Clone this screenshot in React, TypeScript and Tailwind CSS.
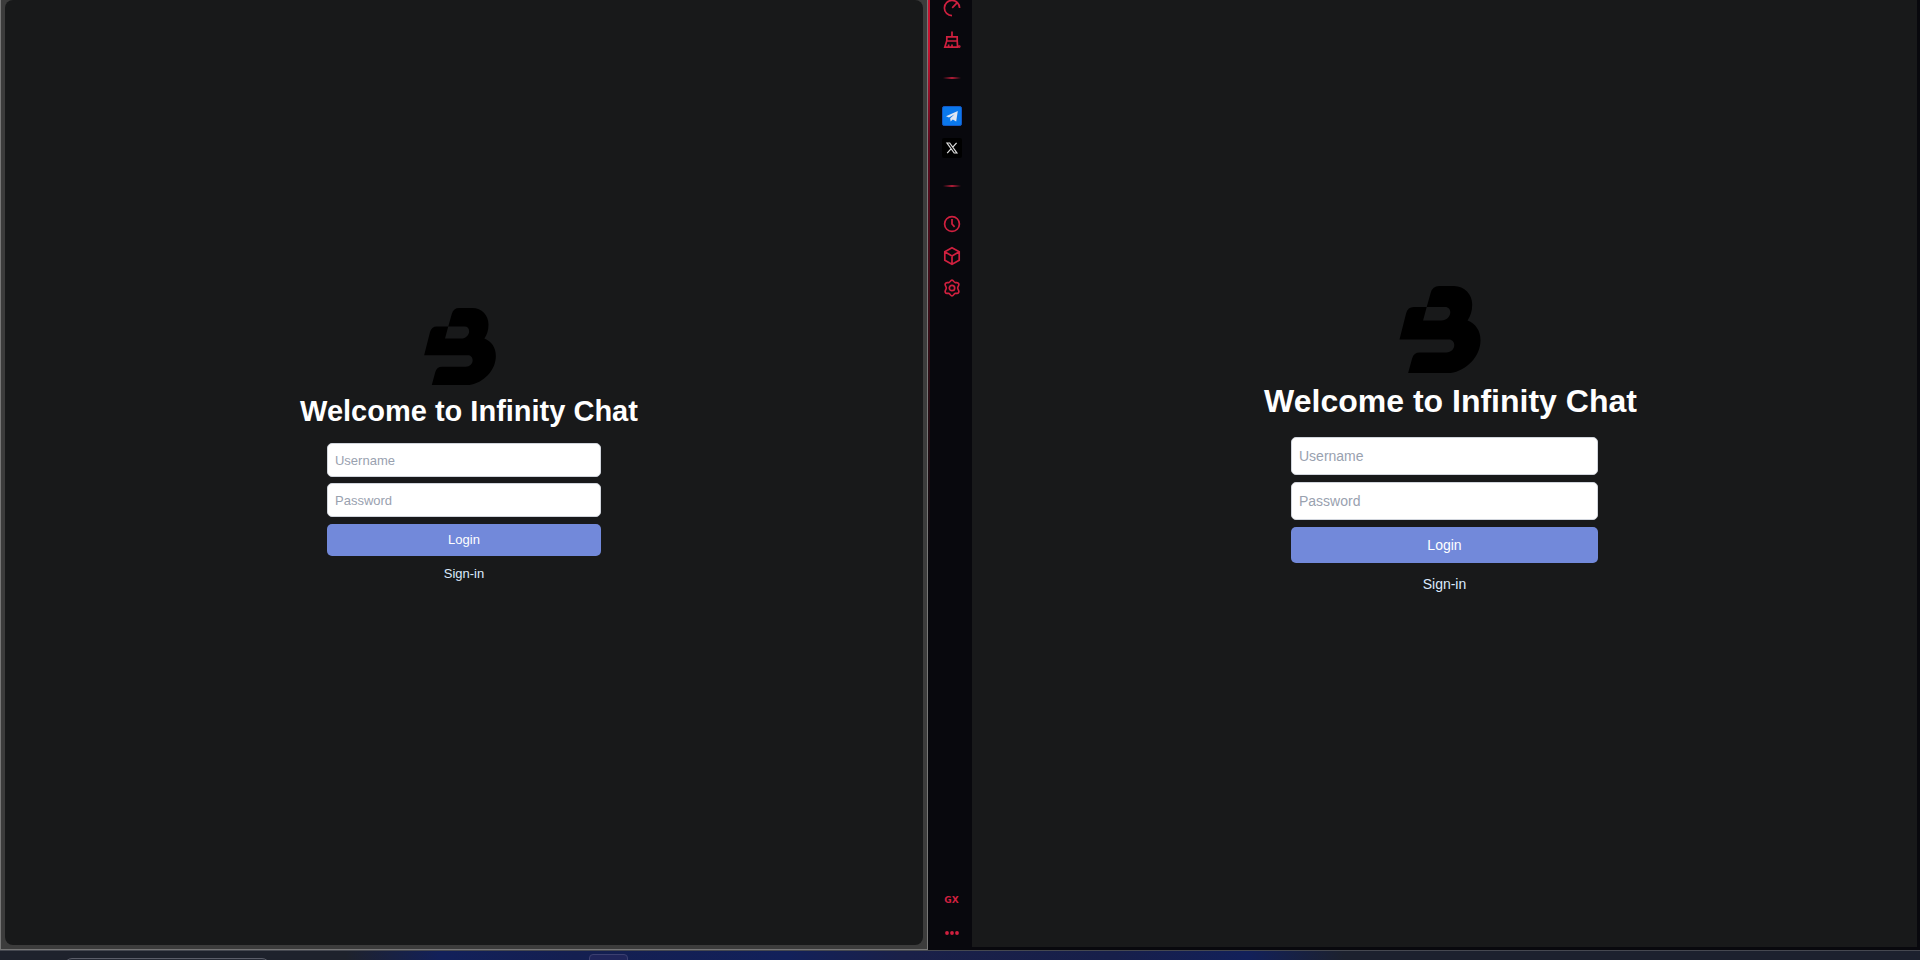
import type { ReactNode } from "react";

function Logo({ className }: { className: string }) {
  return (
    <svg viewBox="0 0 244 262" className={className} aria-hidden="true">
      <path
        fillRule="evenodd"
        d="M82 63L94 20Q100 0 119 0H164C196 0 219 25 219 56C219 76 214 91 205 104C229 113 244 135 244 163C244 213 201 254 154 262H26L38 218Q43 200 61 200H141C156 200 165 190 165 178C165 168 158 161 149 161H0L20 82Q25 63 43 63ZM82 63L71 104H126C142 104 153 92 153 79C153 70 147 63 138 63Z"
        fill="#000"
      />
    </svg>
  );
}

function LargeLogin() {
  return (
    <form className="flex flex-col items-center pb-17" onSubmit={(e) => e.preventDefault()}>
      <Logo className="mr-2 h-[87px] w-[82px]" />
      <h1 className="ml-3 mt-2 text-[32px] leading-10 font-bold text-white">Welcome to Infinity Chat</h1>
      <input
        aria-label="Username"
        placeholder="Username"
        className="mt-4 h-[38px] w-[307px] rounded-[5px] border border-gray-300 bg-white px-[7px] text-sm text-gray-800 placeholder:text-gray-400"
      />
      <input
        type="password"
        aria-label="Password"
        placeholder="Password"
        className="mt-[7px] h-[38px] w-[307px] rounded-[5px] border border-gray-300 bg-white px-[7px] text-sm text-gray-800 placeholder:text-gray-400"
      />
      <button className="mt-[7px] h-9 w-[307px] rounded-[5px] bg-[#7289da] text-sm text-white">Login</button>
      <a href="#signin" className="mt-[11px] text-sm text-blue-100">
        Sign-in
      </a>
    </form>
  );
}

function SmallLogin() {
  return (
    <form className="flex flex-col items-center pb-[53px]" onSubmit={(e) => e.preventDefault()}>
      <Logo className="mr-2 h-[77px] w-[72px]" />
      <h1 className="ml-[10px] mt-2 text-[29px] leading-9 font-bold text-white">Welcome to Infinity Chat</h1>
      <input
        aria-label="Username"
        placeholder="Username"
        className="mt-[14px] h-[34px] w-[274px] rounded-[5px] border border-gray-300 bg-white px-[7px] text-[13px] text-gray-800 placeholder:text-gray-400"
      />
      <input
        type="password"
        aria-label="Password"
        placeholder="Password"
        className="mt-[6px] h-[34px] w-[274px] rounded-[5px] border border-gray-300 bg-white px-[7px] text-[13px] text-gray-800 placeholder:text-gray-400"
      />
      <button className="mt-[7px] h-8 w-[274px] rounded-[5px] bg-[#7289da] text-[13px] text-white">Login</button>
      <a href="#signin" className="mt-2 text-[13px] leading-5 text-blue-100">
        Sign-in
      </a>
    </form>
  );
}

function SideButton({ label, children }: { label: string; children: ReactNode }) {
  return (
    <button aria-label={label} className="flex h-8 w-8 items-center justify-center text-[#d0203f]">
      {children}
    </button>
  );
}

function Icon({ children }: { children: ReactNode }) {
  return (
    <svg viewBox="0 0 20 20" className="h-5 w-5" fill="none" stroke="currentColor" strokeWidth="1.7" aria-hidden="true">
      {children}
    </svg>
  );
}

function Divider() {
  return <div className="my-[21px] h-[2px] w-[18px] bg-linear-to-r from-transparent via-[#b01c37] to-transparent" />;
}

function Sidebar() {
  return (
    <nav className="flex w-11 shrink-0 bg-[#08080d]">
      <div className="w-[2px] bg-linear-to-b from-[#c4122f] from-5% via-[#5a0a1e] via-15% to-[#08080d] to-60%" />
      <div className="flex flex-1 flex-col items-center pl-px">
        <div className="-mt-2 flex flex-col items-center">
          <SideButton label="Limits">
            <Icon>
              <path d="M10 17.6A7.6 7.6 0 1 1 17.6 10M10.2 9.8l4.6-4.6" />
            </Icon>
          </SideButton>
          <SideButton label="Cleaner">
            <Icon>
              <path d="M10 1.5v5M4.8 11V6.8h10.4V11M4.8 11h10.4M4.8 10.8l-2 6.4h12.8L15.2 10.8M6.6 17v-2.6M10 17v-2.6" />
              <circle cx="17.2" cy="16.6" r=".6" />
            </Icon>
          </SideButton>
        </div>
        <Divider />
        <SideButton label="Telegram">
          <svg viewBox="0 0 20 20" className="h-5 w-5" aria-hidden="true">
            <rect x=".5" y=".5" width="19" height="19" rx="1.6" fill="#0a78ec" stroke="#1558c4" />
            <path d="M4 10.3L15.8 5L14.2 15.4L10.8 13.4L8.6 15.4L8.2 12.2L12.6 8.2L7 11.6Z" fill="#dfe6f2" />
          </svg>
        </SideButton>
        <SideButton label="X">
          <svg viewBox="0 0 20 20" className="h-5 w-5" aria-hidden="true">
            <rect width="20" height="20" rx="2" fill="#000" />
            <path d="M5 5h2.7l7.2 10h-2.7ZM14.6 4.8L10.8 9.2M5.2 15.2L9.2 10.7" fill="none" stroke="#ddd" strokeWidth="1.2" />
          </svg>
        </SideButton>
        <Divider />
        <SideButton label="History">
          <Icon>
            <circle cx="10" cy="10" r="7.4" />
            <path d="M10 5v5l2.6 2.8" />
          </Icon>
        </SideButton>
        <SideButton label="Extensions">
          <Icon>
            <path d="M10 1.8l7.2 4v8.4l-7.2 4l-7.2-4V5.8ZM2.8 5.8L10 10l7.2-4.2M10 10v8.2" />
          </Icon>
        </SideButton>
        <SideButton label="Settings">
          <Icon>
            <path
              d="M10 2.1C11.6 2.1 11.8 4.4 13.2 4.6C14.6 4.8 15.8 3.8 16.7 5.6C17.6 7.4 15.7 8.2 15.7 10C15.7 11.8 17.6 12.6 16.7 14.4C15.8 16.2 14.6 15.2 13.2 15.4C11.8 15.6 11.6 17.9 10 17.9C8.4 17.9 8.2 15.6 6.8 15.4C5.4 15.2 4.2 16.2 3.3 14.4C2.4 12.6 4.3 11.8 4.3 10C4.3 8.2 2.4 7.4 3.3 5.6C4.2 3.8 5.4 4.8 6.8 4.6C8.2 4.4 8.4 2.1 10 2.1Z"
              strokeLinejoin="round"
            />
            <circle cx="10" cy="10" r="2.7" />
          </Icon>
        </SideButton>
        <div className="mt-auto flex flex-col items-center pb-px">
          <SideButton label="GX">
            <span className="font-['DejaVu_Sans',sans-serif] text-[9px] font-bold">GX</span>
          </SideButton>
          <SideButton label="More">
            <svg viewBox="0 0 20 20" className="h-5 w-5" fill="currentColor" aria-hidden="true">
              <circle cx="5" cy="10" r="1.9" />
              <circle cx="10" cy="10" r="1.9" />
              <circle cx="15" cy="10" r="1.9" />
            </svg>
          </SideButton>
        </div>
      </div>
    </nav>
  );
}

export default function App() {
  return (
    <div className="flex h-screen flex-col overflow-hidden bg-[#08080d] font-['Liberation_Sans',Arial,sans-serif]">
      <div className="flex min-h-0 flex-1">
        <section className="flex w-[928px] min-w-0 shrink border-x border-b border-[#777] bg-[#3c3c3c] px-1 pb-1">
          <main className="flex flex-1 items-center justify-center rounded-lg bg-[#18191a]">
            <SmallLogin />
          </main>
        </section>
        <section className="flex min-w-0 flex-1 pr-[3px]">
          <Sidebar />
          <main className="mb-[3px] flex flex-1 items-center justify-center bg-[#18191a]">
            <LargeLogin />
          </main>
        </section>
      </div>
      <footer className="flex h-[10px] shrink-0 overflow-hidden border-t border-[#454850] bg-[linear-gradient(to_right,#1e222c_18%,#12205a_23%,#141f50_30%,#12205a_41%,#1a2048_47%,#171f4a_58%,#12205a_65%,#1c212e_70%)]">
        <div className="ml-16 mt-[7px] h-8 w-[206px] rounded-lg border border-[#5a5d68] bg-[#252934]" />
        <div className="ml-[319px] mt-[3px] h-8 w-[39px] rounded-sm border border-[#3c4070] bg-[#20255a]" />
      </footer>
    </div>
  );
}
